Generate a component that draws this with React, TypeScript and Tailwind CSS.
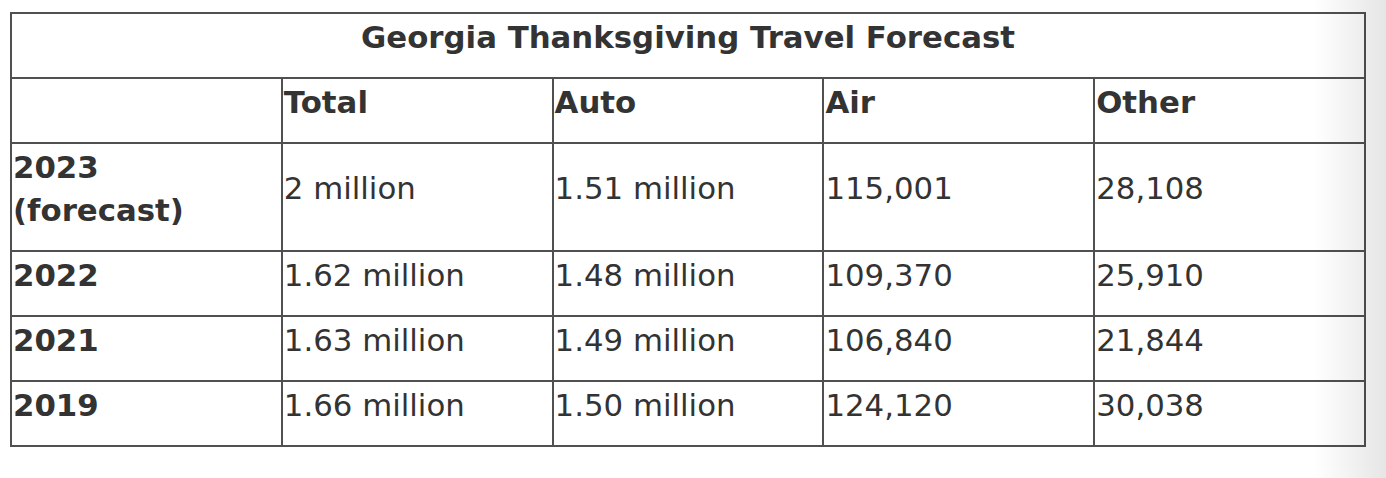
const rows = [
  { year: "2023", note: "(forecast)", total: "2 million", auto: "1.51 million", air: "115,001", other: "28,108" },
  { year: "2022", total: "1.62 million", auto: "1.48 million", air: "109,370", other: "25,910" },
  { year: "2021", total: "1.63 million", auto: "1.49 million", air: "106,840", other: "21,844" },
  { year: "2019", total: "1.66 million", auto: "1.50 million", air: "124,120", other: "30,038" },
];

const cell = "border-2 border-[#505050] pl-[1px] pr-1 pt-[2px] pb-[18.5px] text-left";

export default function App() {
  return (
    <div className="relative h-[478px] w-[1386px] overflow-hidden bg-white pl-[10px] pt-[12px] font-['DejaVu_Sans',Verdana,sans-serif] text-[30.8px] leading-[42.5px] text-[#333]">
      <table className="w-[1356px] table-fixed border-collapse">
        <thead>
          <tr>
            <th colSpan={5} className="border-2 border-[#505050] pt-[2px] pb-[18.5px] text-center font-bold">
              Georgia Thanksgiving Travel Forecast
            </th>
          </tr>
          <tr>
            <th className={`${cell} w-1/5 align-top`}></th>
            <th className={`${cell} w-1/5 align-top font-bold`}>Total</th>
            <th className={`${cell} w-1/5 align-top font-bold`}>Auto</th>
            <th className={`${cell} w-1/5 align-top font-bold`}>Air</th>
            <th className={`${cell} w-1/5 align-top font-bold`}>Other</th>
          </tr>
        </thead>
        <tbody>
          {rows.map((r) => (
            <tr key={r.year}>
              <td className={`${cell} align-top font-bold`}>
                {r.year}
                {r.note && <br />}
                {r.note}
              </td>
              <td className={`${cell} align-middle`}>{r.total}</td>
              <td className={`${cell} align-middle`}>{r.auto}</td>
              <td className={`${cell} align-middle`}>{r.air}</td>
              <td className={`${cell} align-middle`}>{r.other}</td>
            </tr>
          ))}
        </tbody>
      </table>
      <div className="pointer-events-none absolute right-0 top-0 h-full w-[72px] bg-gradient-to-r from-transparent to-black/10" />
    </div>
  );
}
